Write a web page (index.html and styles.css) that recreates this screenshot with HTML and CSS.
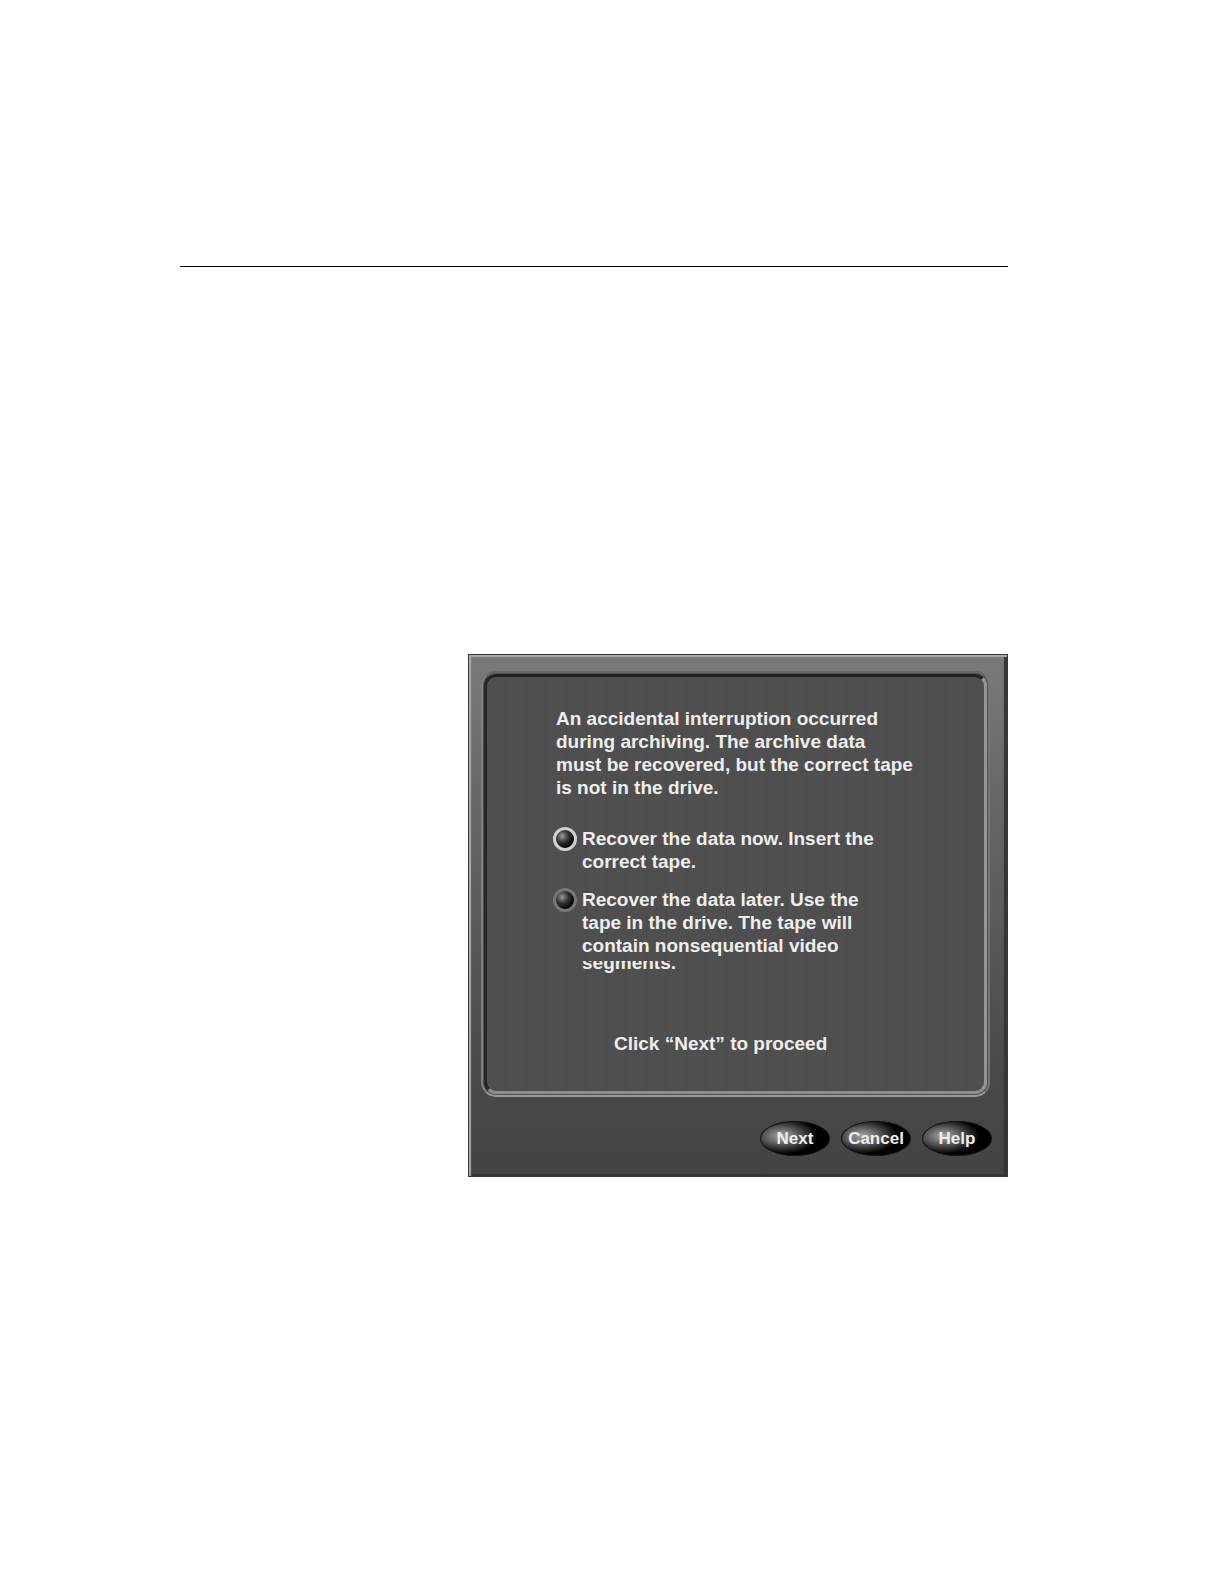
FILE: index.html
```
<!DOCTYPE html>
<html lang="en">
<head>
  <meta charset="UTF-8">
  <title>Archive Recovery</title>
  <meta name="viewport" content="width=device-width, initial-scale=1.0">
  <link rel="stylesheet" href="styles.css">
</head>
<body>

  <main>
    <hr class="rule">

    <form class="dialog">
      <div class="panel">
        <div class="content">
          <p class="message">An accidental interruption occurred<br>during archiving. The archive data<br>must be recovered, but the correct tape<br>is not in the drive.</p>

          <div class="option">
            <input type="radio" name="recover" id="now" checked>
            <label for="now">Recover the data now. Insert the<br>correct tape.</label>
          </div>

          <div class="option">
            <input type="radio" name="recover" id="later">
            <label for="later">Recover the data later. Use the<br>tape in the drive. The tape will<br>contain nonsequential video <span class="clipped">segments.</span></label>
          </div>

          <p class="hint">Click “Next” to proceed</p>
        </div>
      </div>

      <div class="buttons">
        <button type="button">Next</button>
        <button type="button">Cancel</button>
        <button type="button">Help</button>
      </div>
    </form>
  </main>

</body>
</html>
```
FILE: styles.css
```
* { margin: 0; padding: 0; box-sizing: border-box; }
body { background: #fff; color: #eee; font-family: "Liberation Sans", Arial, sans-serif; font-weight: bold; }
main { padding: 266px 216px 0 180px; }
.rule { border: none; height: 1px; background: #000; }

.dialog {
  margin: 387px 0 0 288px;
  padding: 16px 17px 20px 12px;
  border: 1px solid #383838;
  background: linear-gradient(#7a7a7a 0, #6c6c6c 20%, #4a4a4a 78%, #434343 100%);
  box-shadow: inset 2px 2px 1px #aaa, inset -3px -2px 1px #363636;
}

/* beveled frame: soft outer groove, dark top/left, bright bottom/right */
.panel {
  padding: 1px;
  border: 2px solid;
  border-color: #686868 #757575 #999 #808080;
  border-radius: 15px;
  background: #505050;
}
.content {
  padding: 30px 20px 36px 66px;
  border: 3px solid;
  border-color: #222 #959595 #8c8c8c #262626;
  border-radius: 12px;
  background: repeating-linear-gradient(90deg, #4f4f4f 0, #4f4f4f 19px, #4a4a4a 19px, #4a4a4a 20px);
  font-size: 19px;
  line-height: 23px;
}
.message { padding-left: 3px; margin-bottom: 28px; }
.option { display: flex; align-items: flex-start; gap: 5px; margin-bottom: 15px; }
.option input {
  appearance: none;
  flex: none;
  width: 24px;
  height: 24px;
  border: 3px solid #777;
  border-radius: 50%;
  background: radial-gradient(circle at 38% 38%, #999 0, #333 30%, #000 60%) border-box;
}
.option input:checked { border-color: #d0d0d0; }
.clipped { display: flex; align-items: flex-end; height: 13px; margin-top: 4px; overflow: hidden; }
.hint { padding-left: 61px; margin-top: 58px; }

.buttons { display: flex; justify-content: flex-end; gap: 11px; margin: 24px -2px 0 0; }
.buttons button {
  width: 70px;
  height: 35px;
  border: 1px solid #111;
  border-radius: 50%;
  background: radial-gradient(ellipse 36px 18px at 30% 42%, #aaa 0, #777 30%, #000 100%);
  color: #eee;
  font: bold 17px "Liberation Sans", Arial, sans-serif;
  text-align: center;
}
```
